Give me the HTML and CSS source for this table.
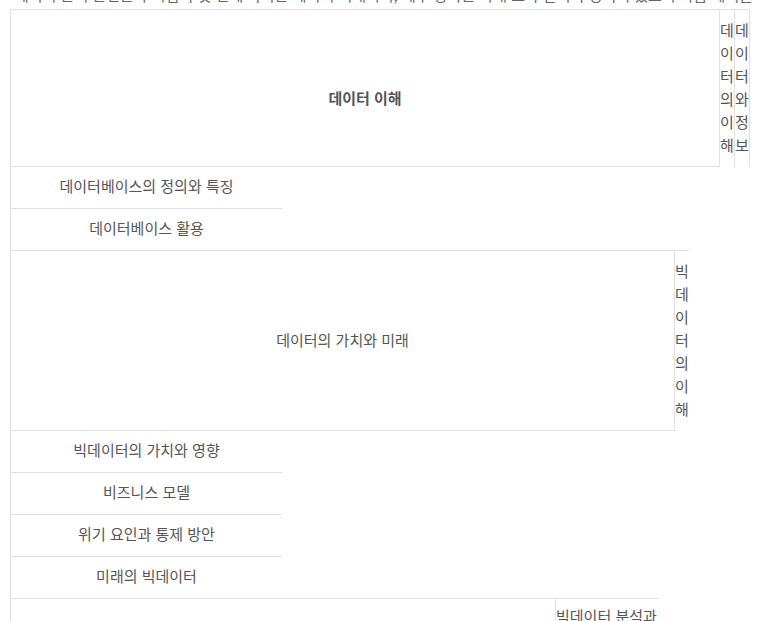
FILE: index.html
```html
<!DOCTYPE html>
<html lang="ko">
<head>
<meta charset="utf-8">
<title>데이터 이해</title>
<link rel="stylesheet" href="styles.css">
</head>
<body>
<p class="lead">데이터 분석 준전문가 시험의 첫 번째 과목은 데이터 이해이며, 세부 항목은 아래 표와 같이 구성되어 있으니 학습 계획을 세울 때 참고하시기 바랍니다.</p>
<div class="page">
  <section class="sec sec1">
    <div class="row">
      <div class="main main-top"><strong>데이터 이해</strong></div>
      <div class="vcol vcol-line">데이터의 이해</div>
      <div class="vcol vcol-line">데이터와 정보</div>
    </div>
    <div class="item">데이터베이스의 정의와 특징</div>
    <div class="item">데이터베이스 활용</div>
  </section>
  <section class="sec sec2">
    <div class="row">
      <div class="main">데이터의 가치와 미래</div>
      <div class="vcol">빅데이터의 이해</div>
    </div>
    <div class="item">빅데이터의 가치와 영향</div>
    <div class="item">비즈니스 모델</div>
    <div class="item">위기 요인과 통제 방안</div>
    <div class="item">미래의 빅데이터</div>
  </section>
  <section class="sec sec3">
    <div class="row">
      <div class="main">데이터 사이언스와 전략 인사이트</div>
      <div class="vcol vcol-wide">빅데이터 분석과 전략 인사이트</div>
    </div>
  </section>
</div>
</body>
</html>
```
FILE: styles.css
```css
html, body {
  margin: 0;
  padding: 0;
  background: #fff;
}
body {
  font-family: "Noto Sans CJK KR", "Noto Sans", sans-serif;
  font-size: 15px;
  color: #555;
}
.lead {
  margin: 0;
  height: 6px;
  padding-bottom: 3px;
  overflow: hidden;
  white-space: nowrap;
  display: flex;
  align-items: flex-end;
  padding-left: 15px;
  line-height: 23px;
  color: #666;
}
.page {
  margin-left: 10px;
  border-left: 1px solid #e0e0e0;
  min-height: 700px;
}
.sec1 { width: 739px; }
.sec2 { width: 678px; }
.sec3 { width: 647px; }
.row {
  display: flex;
  border-top: 1px solid #e0e0e0;
}
.main {
  flex: 1 1 auto;
  display: flex;
  align-items: center;
  justify-content: center;
  border-right: 1px solid #e0e0e0;
  border-bottom: 1px solid #e0e0e0;
  line-height: 23px;
  padding-bottom: 3px;
}
.main-top {
  padding-top: 18px;
  padding-bottom: 0;
}
.main strong {
  font-weight: 700;
}
.vcol {
  flex: 0 0 14px;
  width: 14px;
  padding: 8px 0 11px;
  line-height: 23px;
  word-break: break-all;
}
.vcol-line {
  border-right: 1px solid #e0e0e0;
}
.vcol-wide {
  flex: 0 0 102px;
  width: 102px;
  padding-top: 5px;
  min-height: 200px;
}
.item {
  width: 271px;
  padding: 7px 0 11px;
  line-height: 23px;
  text-align: center;
}
.item + .item {
  border-top: 1px solid #e0e0e0;
}
```
